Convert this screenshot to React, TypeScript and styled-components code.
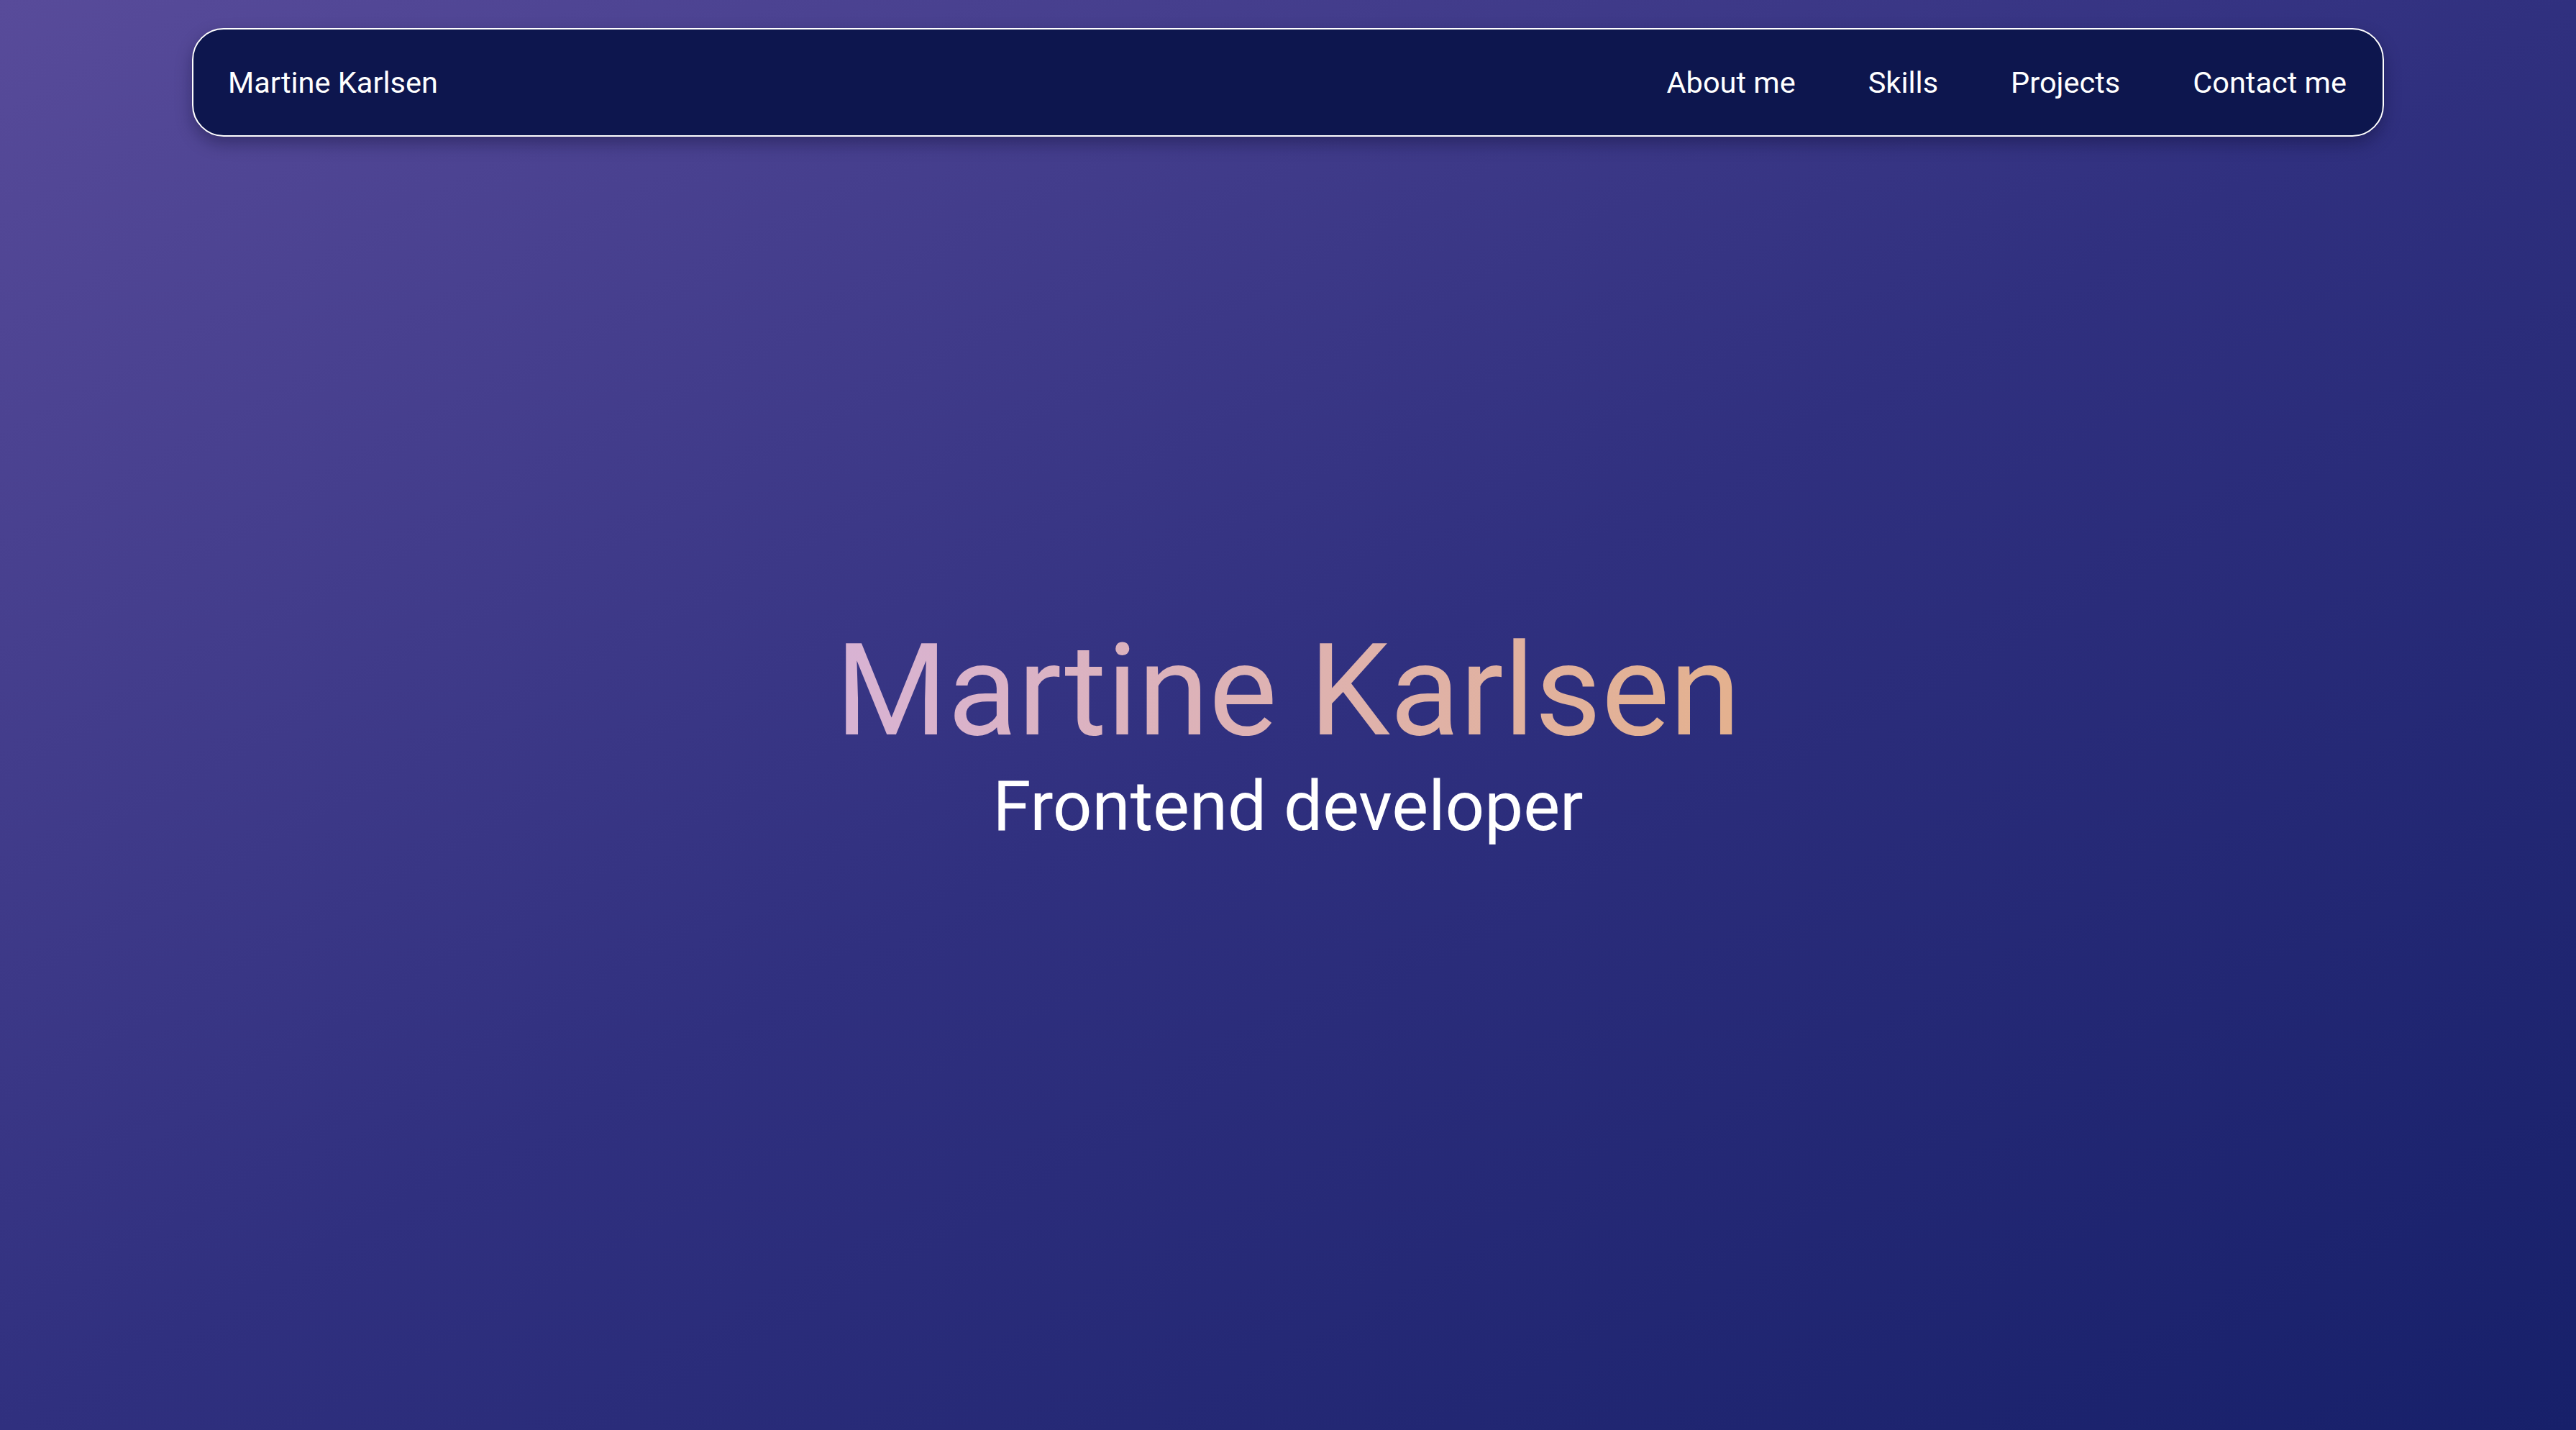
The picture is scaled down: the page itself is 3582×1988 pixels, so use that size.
import styled, { createGlobalStyle } from "styled-components";

const GlobalStyle = createGlobalStyle`
  * {
    box-sizing: border-box;
  }

  body {
    margin: 0;
    font-family: Roboto, "Liberation Sans", sans-serif;
    color: #ffffff;
  }
`;

const links = ["About me", "Skills", "Projects", "Contact me"];

const App = () => {
  return (
    <Page>
      <GlobalStyle />
      <Header>
        <Nav>
          <Brand>Martine Karlsen</Brand>
          <Links>
            {links.map((l) => (
              <li key={l}>
                <NavLink href={`#${l.toLowerCase().replace(" ", "-")}`}>{l}</NavLink>
              </li>
            ))}
          </Links>
        </Nav>
      </Header>
      <Hero>
        <Title>Martine Karlsen</Title>
        <Subtitle>Frontend developer</Subtitle>
      </Hero>
    </Page>
  );
};

export default App;

const Page = styled.div`
  min-height: 100vh;
  display: flex;
  flex-direction: column;
  background: linear-gradient(to bottom right, #584b9a 0%, #30307f 50%, #17206a 100%);
`;

const Header = styled.header`
  padding-top: 39px;
  display: flex;
  justify-content: center;
`;

const Nav = styled.nav`
  width: 3048px;
  height: 151px;
  display: flex;
  align-items: center;
  justify-content: space-between;
  padding: 0 50px 0 48px;
  background-color: #0d164e;
  border: 2px solid #ffffff;
  border-radius: 44px;
  box-shadow: 0 10px 22px rgba(10, 8, 40, 0.35);
`;

const Brand = styled.span`
  font-size: 41.5px;
  font-weight: 400;
`;

const Links = styled.ul`
  display: flex;
  gap: 101px;
  list-style: none;
  margin: 0;
  padding: 0;
`;

const NavLink = styled.a`
  font-size: 41.5px;
  color: #ffffff;
  text-decoration: none;
`;

const Hero = styled.main`
  flex: 1;
  display: flex;
  flex-direction: column;
  align-items: center;
  justify-content: center;
  padding-bottom: 146px;
`;

const Title = styled.h1`
  margin: 0;
  font-size: 179px;
  font-weight: 400;
  line-height: normal;
  background: linear-gradient(90deg, #d8b3d4, #e4b18e);
  -webkit-background-clip: text;
  background-clip: text;
  color: transparent;
`;

const Subtitle = styled.p`
  margin: 0;
  font-size: 96px;
  line-height: normal;
`;
